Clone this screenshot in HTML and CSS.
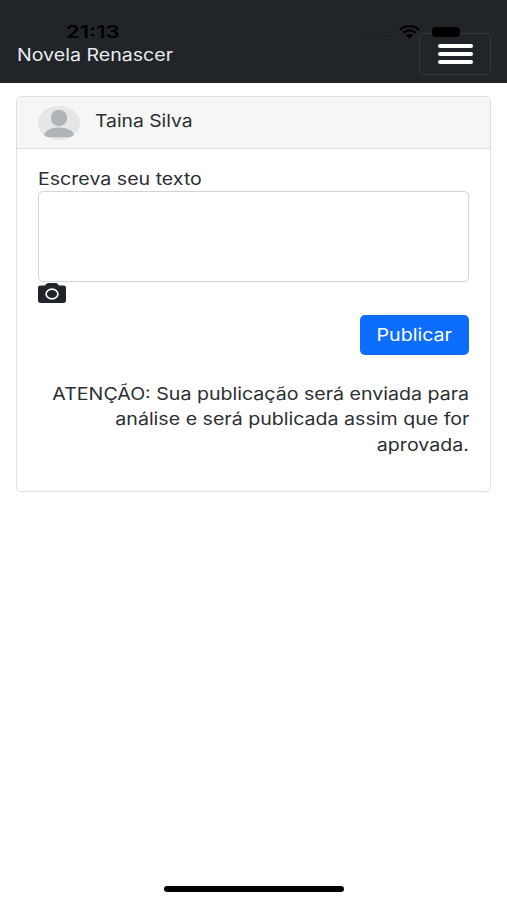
FILE: index.html
```html
<!DOCTYPE html>
<html lang="pt-br">
<head>
    <meta charset="UTF-8">
    <meta name="viewport" content="width=device-width, initial-scale=1.0">
    <title>Novela Renascer</title>
    <link rel="stylesheet" href="styles.css">
</head>
<body>
    <nav class="navbar">
        <div class="status">
            <span class="clock wide">21:13</span>
            <div class="status-icons">
                <span class="signal"><i></i><i></i><i></i></span>
                <svg class="wifi" viewBox="0 0 22 15" preserveAspectRatio="none">
                    <path d="M1 5.2C6.500 0 15.500 0 21 5.200M4.500 8.500C8.500 5 13.500 5 17.500 8.500" fill="none" stroke="#000" stroke-width="2.400"/>
                    <path d="M7.200 11.200C9.500 9.300 12.500 9.300 14.800 11.200L11 14.800Z" fill="#000"/>
                </svg>
                <span class="battery"></span>
            </div>
        </div>
        <span class="brand wide">Novela Renascer</span>
        <button class="toggler" type="button" aria-label="Menu">
            <span class="bar"></span>
            <span class="bar"></span>
            <span class="bar"></span>
        </button>
    </nav>

    <main class="card">
        <div class="card-header">
            <svg class="avatar" viewBox="0 0 42 34" preserveAspectRatio="none">
                <defs>
                    <clipPath id="avatarClip"><ellipse cx="21" cy="17" rx="21" ry="17"/></clipPath>
                </defs>
                <ellipse cx="21" cy="17" rx="21" ry="17" fill="#e4e6e7"/>
                <g clip-path="url(#avatarClip)" fill="#aeb4b7">
                    <ellipse cx="21" cy="12" rx="8.200" ry="8.300"/>
                    <path d="M6 29.500C6 24.500 14 21.500 21 21.500S36 24.500 36 29.500Q36 31.300 33.500 31.300H8.500Q6 31.300 6 29.500Z"/>
                </g>
            </svg>
            <span class="user wide">Taina Silva</span>
        </div>
        <form class="card-body">
            <label class="label wide" for="texto">Escreva seu texto</label>
            <textarea class="texto" id="texto"></textarea>
            <svg class="camera" viewBox="0 0 28 20" preserveAspectRatio="none">
                <path d="M3 2.500H7L8.500 .8Q9.200 0 10.500 0H17.500Q18.800 0 19.500 .8L21 2.500H25Q28 2.500 28 4.800V17.500Q28 20 25 20H3Q0 20 0 17.500V4.800Q0 2.500 3 2.500Z" fill="#212529"/>
                <ellipse cx="14" cy="11" rx="5.900" ry="4.900" fill="none" stroke="#fff" stroke-width="1.700"/>
            </svg>
            <button class="publicar" type="button"><span class="wide">Publicar</span></button>
            <p class="aviso">
                <span class="wide">ATENÇÃO: Sua publicação será enviada para</span>
                <span class="wide">análise e será publicada assim que for</span>
                <span class="wide">aprovada.</span>
            </p>
        </form>
    </main>

    <div class="home-bar"></div>
</body>
</html>
```

FILE: styles.css
```css
* {
    box-sizing: border-box;
}
body {
    margin: 0;
    height: 900px;
    display: flex;
    flex-direction: column;
    font-family: Inter, "Liberation Sans", sans-serif;
    font-size: 16.8px;
    line-height: 25.2px;
    color: #2b2f32;
    background: #fff;
    overflow: hidden;
}
/* texto alargado na horizontal */
.wide {
    display: inline-block;
    white-space: nowrap;
    transform: scaleX(1.167);
    transform-origin: left center;
}
.navbar {
    position: relative;
    flex: none;
    height: 83px;
    padding: 33px 16px 0 17px;
    display: flex;
    justify-content: space-between;
    align-items: flex-start;
    background: #212529;
}
.brand {
    margin-top: 10px;
    color: #e9ebec;
}
.toggler {
    width: 72px;
    height: 42px;
    padding: 0;
    display: flex;
    flex-direction: column;
    align-items: center;
    justify-content: center;
    gap: 4px;
    background: none;
    border: 1px solid #33383c;
    border-radius: 5px;
}
.bar {
    width: 35px;
    height: 4px;
    background: #fff;
    border-radius: 2px;
}
/* barra de status por cima do menu */
.status {
    position: absolute;
    top: 22px;
    left: 66px;
    right: 47px;
    height: 20px;
    display: flex;
    justify-content: space-between;
    align-items: center;
    color: #000;
}
.clock {
    margin-top: 2px;
    font-size: 17px;
    font-weight: 600;
    transform: scaleX(1.3);
}
.status-icons {
    display: flex;
    align-items: center;
}
.signal {
    display: flex;
    gap: 5px;
    margin: 8px 9px 0 0;
}
.signal i {
    width: 5px;
    height: 2px;
    background: #1d2124;
}
.wifi {
    width: 21px;
    height: 14px;
    margin-right: 12px;
}
.battery {
    width: 28px;
    height: 10px;
    background: #000;
    border-radius: 4px;
}
.card {
    flex: none;
    height: 396px;
    margin: 13px 16px 0;
    border: 1px solid #dfdfdf;
    border-radius: 5px;
}
.card-header {
    height: 52px;
    padding: 0 21px;
    display: flex;
    align-items: center;
    background: #f6f6f6;
    border-bottom: 1px solid #dfdfdf;
    border-radius: 4px 4px 0 0;
}
.avatar {
    width: 42px;
    height: 34px;
}
.user {
    margin: -1px 0 0 15px;
    transform: scaleX(1.15);
}
.card-body {
    padding: 18px 21px 0;
    display: flex;
    flex-direction: column;
}
.label {
    align-self: flex-start;
}
.texto {
    height: 91px;
    margin-top: -1px;
    padding: 6px 12px;
    border: 1px solid #ced4da;
    border-radius: 5px;
    font: inherit;
    resize: none;
}
.camera {
    width: 28px;
    height: 20px;
    margin-top: 1px;
}
.publicar {
    align-self: flex-end;
    width: 109px;
    height: 40px;
    margin-top: 12px;
    padding: 1px 0 0;
    background: #0d6efd;
    color: #fff;
    border: none;
    border-radius: 5px;
    font: inherit;
}
.publicar .wide {
    transform-origin: center;
}
.aviso {
    margin: 27px 0 0;
    display: flex;
    flex-direction: column;
    align-items: flex-end;
}
.aviso .wide {
    transform-origin: right center;
}
.home-bar {
    width: 180px;
    height: 6px;
    margin: auto auto 8px;
    background: #000;
    border-radius: 3px;
}
```
